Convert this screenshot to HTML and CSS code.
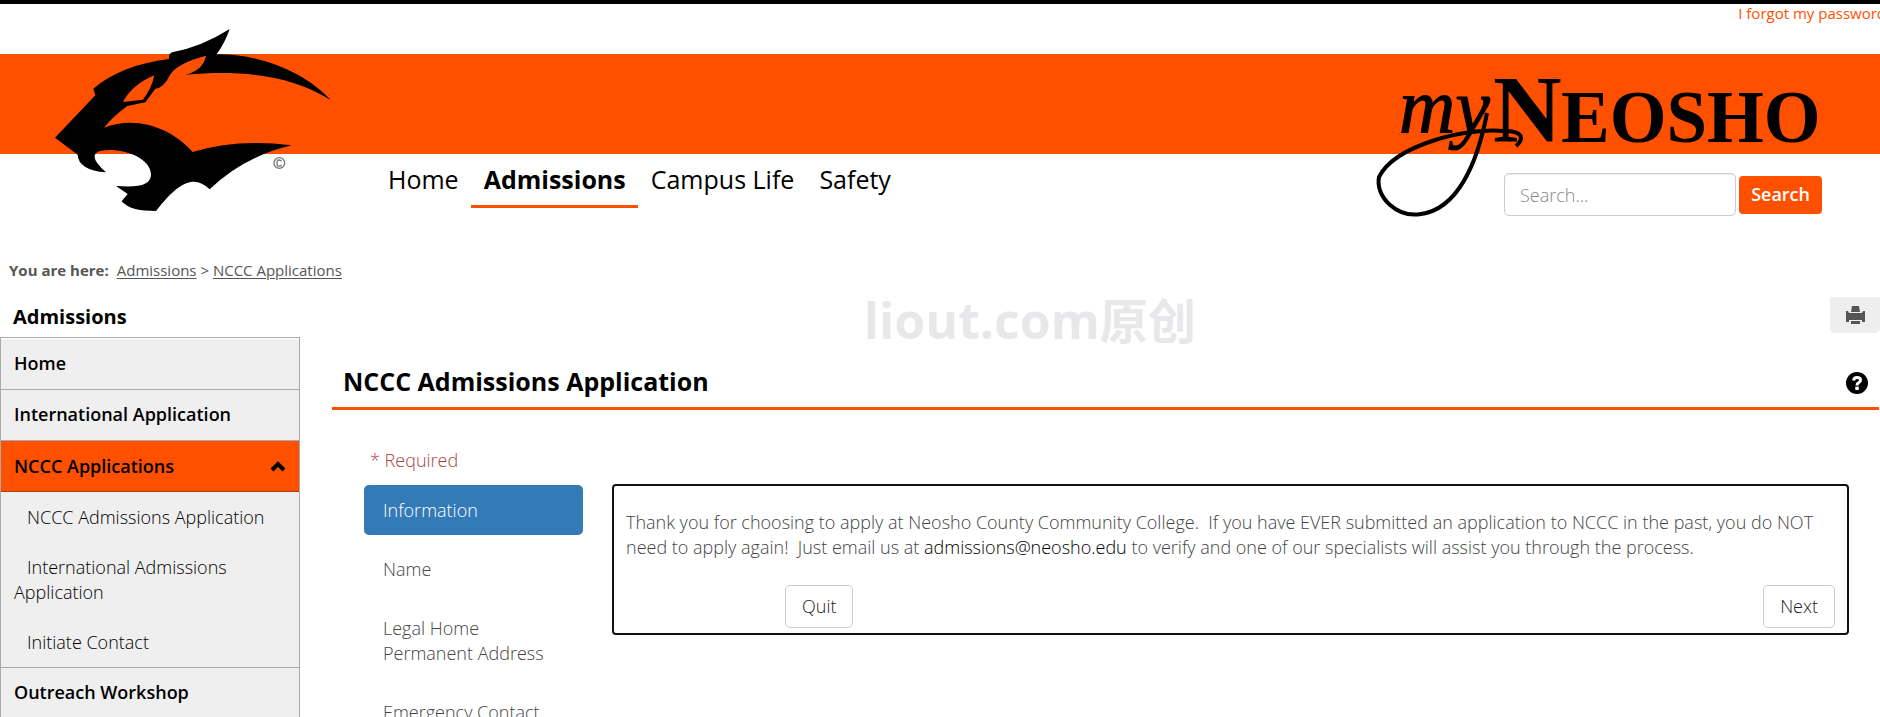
FILE: index.html
```html
<!DOCTYPE html>
<html lang="en">
<head>
<meta charset="utf-8">
<title>NCCC Admissions Application | myNeosho</title>
<link rel="stylesheet" href="styles.css">
</head>
<body>
<div class="page">
  <header class="header">
    <a class="logo" href="#" aria-label="Neosho Panthers">
      <svg class="logo-art" viewBox="0 0 930 600" aria-hidden="true">
        <path fill-rule="evenodd" d="M45 353 L166 226 L160 206 C215 158 290 130 387 117 Q385 98 400 96 Q485 80 569 27 Q555 68 530 103 C660 100 800 160 872 240 C750 165 610 150 437 164 Q490 150 498 107 Q410 130 390 165 Q370 205 346 206 L316 247 L262 258 Q218 290 192 323 C290 285 395 325 458 396 Q590 355 755 376 Q610 410 509 508 C465 465 420 480 348 573 C300 573 265 567 245 544 L263 522 L228 498 C300 503 333 495 333 462 C330 410 240 380 180 393 Q140 405 198 457 Q115 450 113 404 Z M249 246 Q275 195 343 166 Q335 205 309 239 Z"/>
        <circle cx="718" cy="429" r="16" fill="none" stroke="#777" stroke-width="4"/>
        <path d="M725 423 Q710 415 711 429 Q710 443 725 436" fill="none" stroke="#777" stroke-width="4"/>
      </svg>
    </a>
    <nav class="nav" aria-label="Main">
      <a class="nav-link" href="#">Home</a>
      <a class="nav-link nav-link-active" href="#">Admissions</a>
      <a class="nav-link" href="#">Campus Life</a>
      <a class="nav-link" href="#">Safety</a>
    </nav>
    <div class="header-side">
      <a class="forgot" href="#">I forgot my password</a>
      <svg class="wordmark" viewBox="0 0 450 150" role="img" aria-label="myNeosho">
        <text class="wordmark-script" x="24" y="62">my</text>
        <text class="wordmark-cap" x="118" y="71">N</text>
        <text class="wordmark-small" x="186" y="71">EOSHO</text>
        <path d="M112 42 C102 94 82 138 46 143 C22 147 0 126 4 106 C20 74 92 56 129 60 C149 60 149 68 141 75" fill="none" stroke="#000" stroke-width="4"/>
      </svg>
      <form class="search">
        <input class="search-input" type="text" placeholder="Search..." aria-label="Search">
        <button class="search-button" type="button">Search</button>
      </form>
    </div>
  </header>

  <div class="crumbs"><strong class="crumbs-label">You are here:</strong><a href="#">Admissions</a> &gt; <a href="#">NCCC Applications</a></div>

  <div class="columns">
    <aside class="sidebar">
      <h2 class="sidebar-title">Admissions</h2>
      <ul class="menu">
        <li class="menu-item"><a class="menu-link" href="#">Home</a></li>
        <li class="menu-item"><a class="menu-link" href="#">International Application</a></li>
        <li class="menu-item">
          <a class="menu-link menu-link-active" href="#">NCCC Applications
            <svg class="chevron" viewBox="0 0 16 11" aria-hidden="true"><path d="M2 9 L8 3 L14 9" fill="none" stroke="#000" stroke-width="4"/></svg>
          </a>
          <ul class="submenu">
            <li><a class="submenu-link" href="#">NCCC Admissions Application</a></li>
            <li><a class="submenu-link" href="#">International Admissions Application</a></li>
            <li><a class="submenu-link" href="#">Initiate Contact</a></li>
          </ul>
        </li>
        <li class="menu-item"><a class="menu-link" href="#">Outreach Workshop</a></li>
      </ul>
    </aside>

    <main class="main">
      <button class="print" type="button" aria-label="Print">
        <svg class="print-icon" viewBox="0 0 19 18" aria-hidden="true"><path fill="#555" d="M6 0h7l1 6H5zM0 5h2l1 2h13l1-2h2v11h-3v-2H3v2H0zM5 15h9v3H5z"/></svg>
      </button>
      <div class="title-row">
        <h1 class="title">NCCC Admissions Application</h1>
        <a class="help" href="#" aria-label="Help">
          <svg class="help-icon" viewBox="0 0 22 22" aria-hidden="true"><circle cx="11" cy="11" r="11"/><path d="M7.500 8.500 Q8 5.500 11 5.500 Q14.500 5.500 14.500 8.200 Q14.500 9.800 12.500 10.800 Q11 11.500 11 13.500" fill="none" stroke="#fff" stroke-width="3"/><path fill="#fff" d="M9.300 14.600h3.500v3.400H9.300z"/></svg>
        </a>
      </div>
      <div class="form-area">
        <p class="required">* Required</p>
        <div class="form-columns">
          <nav class="steps" aria-label="Application steps">
            <a class="step step-active" href="#">Information</a>
            <a class="step" href="#">Name</a>
            <a class="step" href="#">Legal Home Permanent Address</a>
            <a class="step" href="#">Emergency Contact</a>
          </nav>
          <section class="panel">
            <p class="panel-text">Thank you for choosing to apply at Neosho County Community College.&nbsp; If you have EVER submitted an application to NCCC in the past, you do NOT need to apply again!&nbsp; Just email us at <a class="mail" href="#">admissions@neosho.edu</a> to verify and one of our specialists will assist you through the process.</p>
            <div class="actions">
              <button class="button" type="button">Quit</button>
              <button class="button" type="button">Next</button>
            </div>
          </section>
        </div>
      </div>
    </main>
  </div>
  <div class="watermark" aria-hidden="true">liout.com<span class="watermark-cjk">原创</span></div>
</div>
</body>
</html>
```
FILE: styles.css
```css
* { box-sizing: border-box; }

body {
  margin: 0;
  background: #fff;
  color: #444;
  font: 340 18px/25px "Open Sans", "Noto Sans CJK SC", sans-serif;
}

button, input { font: inherit; }
ul { margin: 0; padding: 0; list-style: none; }

.page {
  position: relative;
  height: 100vh;
  overflow: hidden;
  border-top: 4px solid #000;
}

.header {
  display: flex;
  height: 254px;
  padding-left: 40px;
  background: linear-gradient(transparent 50px, #ff5000 50px 150px, transparent 150px);
}

.logo { flex: none; width: 310px; padding-top: 16px; }
.logo-art { display: block; width: 310px; height: 200px; }

.nav { display: flex; flex: 1; align-items: flex-start; padding: 154px 0 0 25px; }
.nav-link {
  padding: 4px 12px 8px 13px;
  border-bottom: 3px solid transparent;
  color: #000;
  font-size: 25px;
  font-weight: 400;
  line-height: 35px;
  text-decoration: none;
  white-space: nowrap;
}
.nav-link-active { border-color: #ff5000; font-weight: 700; }

.header-side { display: flex; flex-direction: column; width: 505px; }
.forgot {
  align-self: flex-end;
  margin-right: -6px;
  color: #ff5000;
  font-size: 15px;
  font-weight: 400;
  line-height: 19px;
  text-decoration: none;
  white-space: nowrap;
}
.wordmark { display: block; width: 450px; height: 150px; margin-top: 48px; overflow: visible; }
.wordmark text { font-family: "Liberation Serif", serif; }
.wordmark-script { font-size: 78px; font-style: italic; font-weight: 400; stroke: #000; stroke-width: 1px; }
.wordmark-cap { font-size: 95px; font-weight: 700; }
.wordmark-small { font-size: 73px; font-weight: 700; }

.search { display: flex; gap: 3px; align-items: center; margin: -48px 58px 0 129px; }
.search-input {
  flex: 1;
  min-width: 0;
  height: 43px;
  padding: 0 15px;
  border: 1px solid #ccc;
  border-radius: 5px;
  box-shadow: inset 0 1px 1px rgba(0, 0, 0, .08);
}
.search-input::placeholder { color: #888; }
.search-button {
  height: 38px;
  padding: 0 12px;
  border: 0;
  border-radius: 4px;
  background: #ff5000;
  color: #fff;
  font-weight: 650;
}

.crumbs { padding-left: 9px; color: #555; font-size: 15px; font-weight: 400; }
.crumbs a { color: #555; text-underline-offset: 2px; }
.crumbs-label { margin-right: 8px; }

.columns { display: flex; gap: 32px; align-items: flex-start; padding-top: 14px; }

.sidebar { flex: none; width: 300px; }
.sidebar-title { margin: 0; padding: 7px 13px 8px; color: #000; font-size: 20px; font-weight: 700; line-height: 25px; }
.menu { padding-top: 1px; border: 1px solid #a9a9a9; background: #efefef; box-shadow: inset 0 1px #fff; }
.menu-item + .menu-item { border-top: 1px solid #a9a9a9; }
.menu-link {
  display: flex;
  align-items: center;
  justify-content: space-between;
  padding: 12px 13px 13px;
  color: #000;
  font-weight: 650;
  text-decoration: none;
}
.menu-link-active { padding-top: 13px; background: #ff5000; box-shadow: inset 0 -1px #a9400f; }
.chevron { width: 16px; height: 11px; }
.submenu-link { display: block; padding: 13px 13px 12px; color: #000; text-decoration: none; text-indent: 13px; }

.main { display: flex; flex: 1; flex-direction: column; min-width: 0; }
.print {
  display: flex;
  align-items: center;
  justify-content: center;
  align-self: flex-end;
  width: 50px;
  height: 36px;
  padding: 0;
  border: 0;
  border-radius: 0 0 5px 5px;
  background: #eee;
}
.print-icon { width: 19px; height: 18px; }
.title-row {
  display: flex;
  align-items: center;
  justify-content: space-between;
  margin: 24px 1px 0 0;
  padding: 6px 11px 8px;
  border-bottom: 3px solid #ff5000;
}
.title { margin: 0; color: #000; font-size: 25px; font-weight: 700; line-height: 36px; }
.help-icon { display: block; width: 22px; height: 22px; margin-top: 3px; }

.form-area { padding: 38px 31px 0 32px; }
.required { margin: 0 0 11px 6px; color: #a94442; }
.form-columns { display: flex; gap: 29px; align-items: flex-start; }
.steps { display: flex; flex: none; flex-direction: column; gap: 9px; width: 219px; padding-top: 1px; }
.step { padding: 13px 30px 12px 19px; border-radius: 5px; color: #444; text-decoration: none; }
.step-active { background: #337ab7; color: #fff; }

.panel { flex: 1; min-width: 0; padding: 24px 12px 5px; border: 2px solid #111; border-radius: 4px; }
.panel-text { margin: 0 0 25px; }
.mail { color: #000; text-decoration: none; }
.actions { display: flex; justify-content: space-between; padding-left: 159px; }
.button { height: 43px; padding: 0 16px; border: 1px solid #ccc; border-radius: 5px; background: #fff; color: #222; }

.watermark {
  position: absolute;
  top: 281px;
  left: 46%;
  margin-left: -1px;
  color: #e8e8eb;
  font-size: 50px;
  font-weight: 700;
  line-height: 70px;
  pointer-events: none;
}
.watermark-cjk { font-size: 48px; }
```
